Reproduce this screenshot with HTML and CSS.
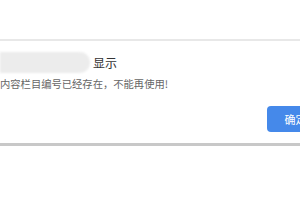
FILE: index.html
```html
<!DOCTYPE html>
<html lang="zh">
<head>
    <meta charset="UTF-8">
    <meta name="viewport" content="width=device-width, initial-scale=1.0">
    <title>提示</title>
    <link rel="stylesheet" href="styles.css">
</head>
<body>
    <div class="dialog">
        <div class="dialog-title">
            <span class="site-blur"></span>
            <span class="title-text">显示</span>
        </div>
        <div class="dialog-msg">内容栏目编号已经存在，不能再使用!</div>
        <div class="dialog-footer">
            <button class="btn-ok">确定</button>
        </div>
    </div>
</body>
</html>
```

FILE: styles.css
```css
body {
    margin: 0;
    background: #fff;
    overflow: hidden;
    font-family: "Microsoft YaHei", "Noto Sans CJK SC", sans-serif;
}
.dialog {
    width: 330px;
    margin-top: 39px;
    padding: 11px 0;
    background: #fff;
    border-top: 2px solid #e8e8e8;
    border-bottom: 3px solid #c8c8c8;
    box-shadow: 0 1px 1px #e4e4e4;
}
.dialog-title {
    display: flex;
    align-items: center;
    height: 21px;
}
.site-blur {
    width: 90px;
    height: 21px;
    background: #ececec;
    border-radius: 0 10px 10px 0;
    filter: blur(1px);
}
.title-text {
    margin-left: 3px;
    font-size: 12px;
    color: #333;
}
.dialog-msg {
    margin-top: 3px;
    line-height: 16px;
    font-size: 10.3px;
    color: #666;
}
.dialog-footer {
    display: flex;
    justify-content: flex-end;
    margin-top: 14px;
    padding-right: 6px;
}
.btn-ok {
    width: 57px;
    height: 26px;
    border: none;
    border-radius: 4px;
    background: #4589ea;
    color: #fff;
    font-family: inherit;
    font-size: 11px;
    cursor: pointer;
}
```
